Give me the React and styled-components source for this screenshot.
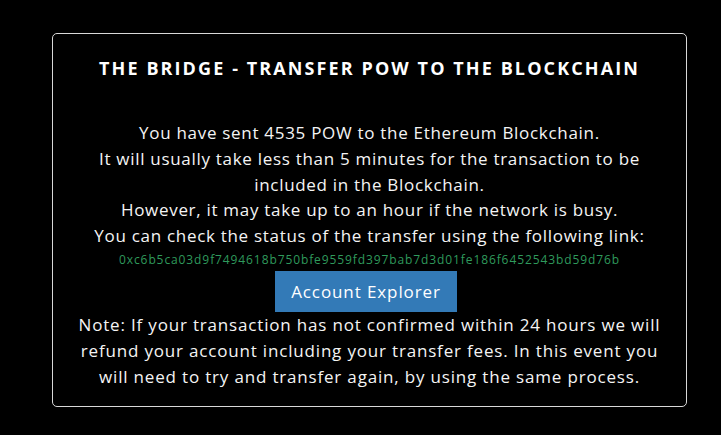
import React from 'react'
import styled, { createGlobalStyle } from 'styled-components'

const Global = createGlobalStyle`
  body {
    margin: 0;
    background: #000;
    font-family: "Open Sans", "Liberation Sans", sans-serif;
  }
`

const Page = styled.div`
  padding: 33px 0 0 52px;
`

const Card = styled.div`
  width: 635px;
  box-sizing: border-box;
  border: 1px solid #d8d8d8;
  border-radius: 5px;
  padding: 22px 10px 17px;
  text-align: center;
  color: #f4f4f4;
`

const Title = styled.h2`
  margin: 0 0 40px;
  font-size: 18px;
  line-height: 24px;
  font-weight: 700;
  letter-spacing: 2.1px;
  color: #fff;
  white-space: nowrap;
`

const Text = styled.p`
  margin: 0;
  font-size: 17px;
  line-height: 25.8px;
  letter-spacing: ${p => p.$spacing || '0.7px'};
  white-space: nowrap;
`

const Hash = styled.div`
  font-size: 12px;
  line-height: 22px;
  letter-spacing: 0.9px;
  color: #2f9a5c;
  white-space: nowrap;
`

const Button = styled.button`
  display: inline-flex;
  align-items: center;
  justify-content: center;
  width: 182px;
  height: 41px;
  margin: 0 7px 0 0;
  border: none;
  background: #337ab7;
  color: #fff;
  font-family: inherit;
  font-size: 17px;
  letter-spacing: 0.9px;
  cursor: pointer;
`

export default function App() {
  return (
    <>
      <Global />
      <Page>
        <Card>
          <Title>THE BRIDGE - TRANSFER POW TO THE BLOCKCHAIN</Title>
          <Text>
            You have sent 4535 POW to the Ethereum Blockchain.<br />
            It will usually take less than 5 minutes for the transaction to be<br />
            included in the Blockchain.<br />
            However, it may take up to an hour if the network is busy.<br />
            You can check the status of the transfer using the following link:
          </Text>
          <Hash>0xc6b5ca03d9f7494618b750bfe9559fd397bab7d3d01fe186f6452543bd59d76b</Hash>
          <Button>Account Explorer</Button>
          <Text $spacing="0.82px">
            Note: If your transaction has not confirmed within 24 hours we will<br />
            refund your account including your transfer fees. In this event you<br />
            will need to try and transfer again, by using the same process.
          </Text>
        </Card>
      </Page>
    </>
  )
}
